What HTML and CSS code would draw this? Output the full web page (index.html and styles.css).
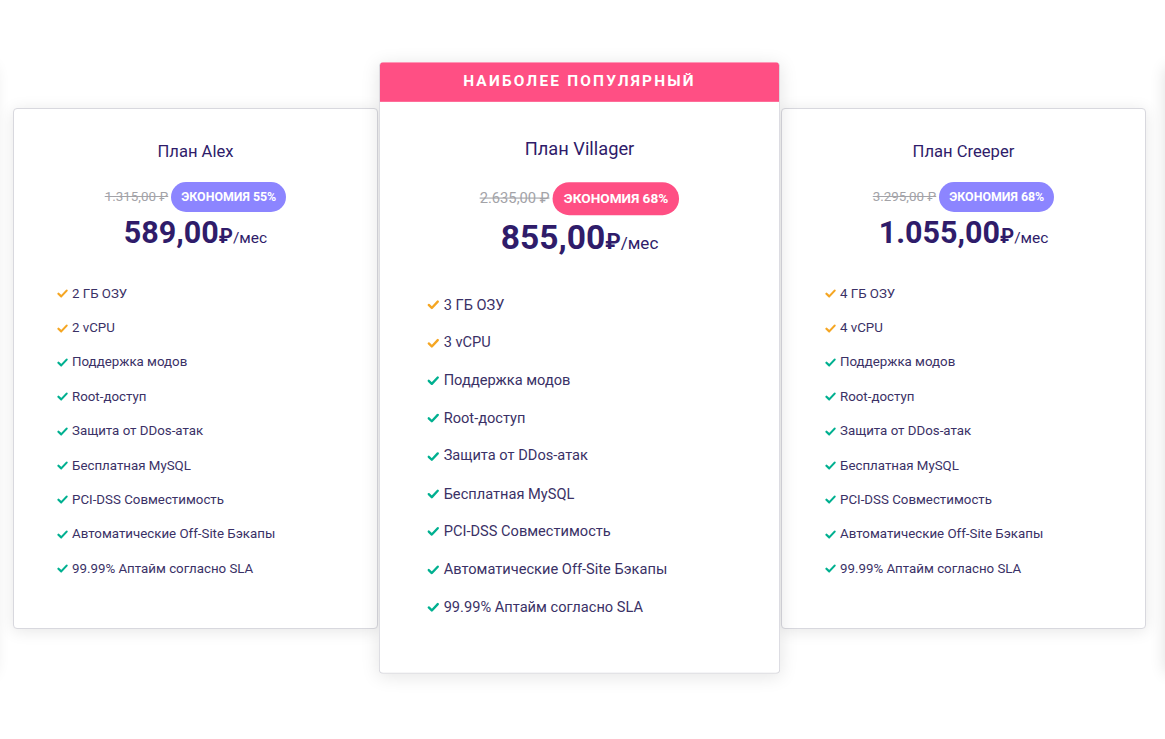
FILE: index.html
```html
<!DOCTYPE html>
<html lang="ru">
<head>
    <meta charset="utf-8">
    <title>Тарифы Minecraft хостинга</title>
    <link rel="stylesheet" href="styles.css">
</head>
<body>

<section class="pricing">
    <div class="track">

        <!-- соседние слайды карусели (видна только тень) -->
        <div class="card ghost"></div>

        <div class="card">
            <div class="card-body">
                <h3 class="plan-name">План Alex</h3>
                <div class="old-row">
                    <span class="old-price">1.315,00 ₽</span>
                    <span class="badge">ЭКОНОМИЯ 55%</span>
                </div>
                <div class="price"><span class="amount">589,00</span><span class="rub">₽</span><span class="per">/мес</span></div>
                <ul class="features">
                    <li class="hl"><svg class="check" viewBox="0 0 12 10"><path d="M1.5 5.2 L4.6 8.2 L10.6 1.8"/></svg>2 ГБ ОЗУ</li>
                    <li class="hl"><svg class="check" viewBox="0 0 12 10"><path d="M1.5 5.2 L4.6 8.2 L10.6 1.8"/></svg>2 vCPU</li>
                    <li><svg class="check" viewBox="0 0 12 10"><path d="M1.5 5.2 L4.6 8.2 L10.6 1.8"/></svg>Поддержка модов</li>
                    <li><svg class="check" viewBox="0 0 12 10"><path d="M1.5 5.2 L4.6 8.2 L10.6 1.8"/></svg>Root-доступ</li>
                    <li><svg class="check" viewBox="0 0 12 10"><path d="M1.5 5.2 L4.6 8.2 L10.6 1.8"/></svg>Защита от DDos-атак</li>
                    <li><svg class="check" viewBox="0 0 12 10"><path d="M1.5 5.2 L4.6 8.2 L10.6 1.8"/></svg>Бесплатная MySQL</li>
                    <li><svg class="check" viewBox="0 0 12 10"><path d="M1.5 5.2 L4.6 8.2 L10.6 1.8"/></svg>PCI-DSS Совместимость</li>
                    <li><svg class="check" viewBox="0 0 12 10"><path d="M1.5 5.2 L4.6 8.2 L10.6 1.8"/></svg>Автоматические Off-Site Бэкапы</li>
                    <li><svg class="check" viewBox="0 0 12 10"><path d="M1.5 5.2 L4.6 8.2 L10.6 1.8"/></svg>99.99% Аптайм согласно SLA</li>
                </ul>
            </div>
        </div>

        <div class="card popular">
            <div class="ribbon">НАИБОЛЕЕ ПОПУЛЯРНЫЙ</div>
            <div class="card-body">
                <h3 class="plan-name">План Villager</h3>
                <div class="old-row">
                    <span class="old-price">2.635,00 ₽</span>
                    <span class="badge">ЭКОНОМИЯ 68%</span>
                </div>
                <div class="price"><span class="amount">855,00</span><span class="rub">₽</span><span class="per">/мес</span></div>
                <ul class="features">
                    <li class="hl"><svg class="check" viewBox="0 0 12 10"><path d="M1.5 5.2 L4.6 8.2 L10.6 1.8"/></svg>3 ГБ ОЗУ</li>
                    <li class="hl"><svg class="check" viewBox="0 0 12 10"><path d="M1.5 5.2 L4.6 8.2 L10.6 1.8"/></svg>3 vCPU</li>
                    <li><svg class="check" viewBox="0 0 12 10"><path d="M1.5 5.2 L4.6 8.2 L10.6 1.8"/></svg>Поддержка модов</li>
                    <li><svg class="check" viewBox="0 0 12 10"><path d="M1.5 5.2 L4.6 8.2 L10.6 1.8"/></svg>Root-доступ</li>
                    <li><svg class="check" viewBox="0 0 12 10"><path d="M1.5 5.2 L4.6 8.2 L10.6 1.8"/></svg>Защита от DDos-атак</li>
                    <li><svg class="check" viewBox="0 0 12 10"><path d="M1.5 5.2 L4.6 8.2 L10.6 1.8"/></svg>Бесплатная MySQL</li>
                    <li><svg class="check" viewBox="0 0 12 10"><path d="M1.5 5.2 L4.6 8.2 L10.6 1.8"/></svg>PCI-DSS Совместимость</li>
                    <li><svg class="check" viewBox="0 0 12 10"><path d="M1.5 5.2 L4.6 8.2 L10.6 1.8"/></svg>Автоматические Off-Site Бэкапы</li>
                    <li><svg class="check" viewBox="0 0 12 10"><path d="M1.5 5.2 L4.6 8.2 L10.6 1.8"/></svg>99.99% Аптайм согласно SLA</li>
                </ul>
            </div>
        </div>

        <div class="card">
            <div class="card-body">
                <h3 class="plan-name">План Creeper</h3>
                <div class="old-row">
                    <span class="old-price">3.295,00 ₽</span>
                    <span class="badge">ЭКОНОМИЯ 68%</span>
                </div>
                <div class="price"><span class="amount">1.055,00</span><span class="rub">₽</span><span class="per">/мес</span></div>
                <ul class="features">
                    <li class="hl"><svg class="check" viewBox="0 0 12 10"><path d="M1.5 5.2 L4.6 8.2 L10.6 1.8"/></svg>4 ГБ ОЗУ</li>
                    <li class="hl"><svg class="check" viewBox="0 0 12 10"><path d="M1.5 5.2 L4.6 8.2 L10.6 1.8"/></svg>4 vCPU</li>
                    <li><svg class="check" viewBox="0 0 12 10"><path d="M1.5 5.2 L4.6 8.2 L10.6 1.8"/></svg>Поддержка модов</li>
                    <li><svg class="check" viewBox="0 0 12 10"><path d="M1.5 5.2 L4.6 8.2 L10.6 1.8"/></svg>Root-доступ</li>
                    <li><svg class="check" viewBox="0 0 12 10"><path d="M1.5 5.2 L4.6 8.2 L10.6 1.8"/></svg>Защита от DDos-атак</li>
                    <li><svg class="check" viewBox="0 0 12 10"><path d="M1.5 5.2 L4.6 8.2 L10.6 1.8"/></svg>Бесплатная MySQL</li>
                    <li><svg class="check" viewBox="0 0 12 10"><path d="M1.5 5.2 L4.6 8.2 L10.6 1.8"/></svg>PCI-DSS Совместимость</li>
                    <li><svg class="check" viewBox="0 0 12 10"><path d="M1.5 5.2 L4.6 8.2 L10.6 1.8"/></svg>Автоматические Off-Site Бэкапы</li>
                    <li><svg class="check" viewBox="0 0 12 10"><path d="M1.5 5.2 L4.6 8.2 L10.6 1.8"/></svg>99.99% Аптайм согласно SLA</li>
                </ul>
            </div>
        </div>

        <div class="card ghost"></div>

    </div>
</section>

</body>
</html>
```

FILE: styles.css
```css
body {
    font-family: Roboto, "Liberation Sans", Arial, sans-serif;
    background-color: #fff;
    color: #2f1c6a;
    margin: 0;
    padding: 0;
}

/* Карусель тарифов */
.pricing {
    overflow: hidden;
    padding: 65px 6px 60px 0;
}
.track {
    display: flex;
    justify-content: center;
    align-items: center;
    gap: 19px;
}

.card {
    flex-shrink: 0;
    width: 365px;
    background-color: #fff;
    border: 1px solid #d8d8de;
    border-radius: 4px;
    box-sizing: border-box;
    box-shadow: 0 2px 16px rgba(0, 0, 0, 0.1);
}
.card.ghost {
    height: 606px;
    box-shadow: 0 2px 16px rgba(0, 0, 0, 0.12);
}
.card.popular {
    transform: scale(1.1); /* выделенный тариф немного крупнее */
    position: relative;
    z-index: 1;
    overflow: hidden;
    border-top: none;
}

.ribbon {
    height: 35.5px;
    line-height: 35.5px;
    background-color: #ff4f84;
    color: #fff;
    text-align: center;
    font-size: 14px;
    font-weight: 700;
    letter-spacing: 2px;
}

.card-body {
    height: 519px;
    box-sizing: border-box;
    padding-top: 32px;
    text-align: center;
}

.plan-name {
    margin: 0;
    font-size: 16.6px;
    line-height: 22px;
    font-weight: 400;
    color: #2f1c6a;
}

.old-row {
    display: flex;
    justify-content: center;
    align-items: center;
    gap: 3px;
    margin-top: 19px;
    height: 30px;
}
.old-price {
    font-size: 13.4px;
    color: #a3a3a8;
    text-decoration: line-through;
}
.badge {
    height: 30px;
    line-height: 30px;
    padding: 0 10px;
    border-radius: 15px;
    background-color: #8c85ff;
    color: #fff;
    font-size: 12.4px;
    font-weight: 700;
}
.popular .badge {
    background-color: #ff4f84;
}

.price {
    margin-top: 3px;
    line-height: 36px;
    color: #2f1c6a;
}
.amount {
    font-size: 30.5px;
    font-weight: 700;
}
.rub {
    font-size: 20px;
    font-weight: 700;
}
.per {
    font-size: 15.5px;
}

.features {
    list-style-type: none;
    margin: 21px 0 0 0;
    padding: 0 0 0 43px;
    text-align: left;
}
.features li {
    display: flex;
    align-items: center;
    gap: 4px;
    padding: 7.2px 0;
    line-height: 20px;
    font-size: 13.3px;
    color: #3a3166;
}
.check {
    width: 11px;
    height: 9px;
    fill: none;
    stroke: #00b090;
    stroke-width: 2.4;
    stroke-linecap: round;
    stroke-linejoin: round;
}
.features li.hl .check {
    stroke: #f5a623;
}
```
